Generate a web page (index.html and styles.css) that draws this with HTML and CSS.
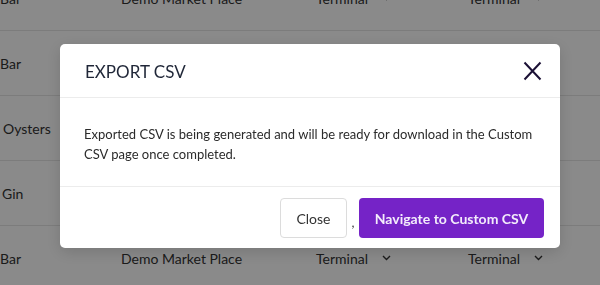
FILE: index.html
```html
<!DOCTYPE html>
<html>
<head>
    <title>Export CSV</title>
    <link rel="stylesheet" href="styles.css">
</head>
<body>
    <div class="tabla">
        <div class="fila">
            <div class="nombre">Bar</div>
            <div>Demo Market Place</div>
            <div class="select">Terminal <svg width="9" height="6" viewBox="0 0 9 6"><path d="M1 1l3.5 3.5L8 1" fill="none" stroke="#333" stroke-width="1.4"/></svg></div>
            <div class="select">Terminal <svg width="9" height="6" viewBox="0 0 9 6"><path d="M1 1l3.5 3.5L8 1" fill="none" stroke="#333" stroke-width="1.4"/></svg></div>
        </div>
        <div class="fila">
            <div class="nombre">Bar</div>
            <div>Demo Market Place</div>
            <div class="select">Terminal</div>
            <div class="select">Terminal</div>
        </div>
        <div class="fila">
            <div class="nombre corrido">Oysters</div>
            <div>Demo Market Place</div>
            <div class="select">Terminal</div>
            <div class="select">Terminal</div>
        </div>
        <div class="fila">
            <div class="nombre corrido-2">Gin</div>
            <div>Demo Market Place</div>
            <div class="select">Terminal</div>
            <div class="select">Terminal</div>
        </div>
        <div class="fila">
            <div class="nombre">Bar</div>
            <div>Demo Market Place</div>
            <div class="select">Terminal <svg width="9" height="6" viewBox="0 0 9 6"><path d="M1 1l3.5 3.5L8 1" fill="none" stroke="#333" stroke-width="1.4"/></svg></div>
            <div class="select">Terminal <svg width="9" height="6" viewBox="0 0 9 6"><path d="M1 1l3.5 3.5L8 1" fill="none" stroke="#333" stroke-width="1.4"/></svg></div>
        </div>
    </div>

    <!-- Fondo oscuro y ventana modal -->
    <div class="overlay">
        <div class="modal">
            <div class="modal-header">
                <h3>EXPORT CSV</h3>
                <button class="cerrar" aria-label="Cerrar">
                    <svg width="19" height="20" viewBox="0 0 19 20"><path d="M1.5 1.5l16 17M17.5 1.5l-16 17" stroke="#1b1035" stroke-width="2" fill="none"/></svg>
                </button>
            </div>
            <div class="modal-body">
                Exported CSV is being generated and will be ready for download in the Custom CSV page once completed.
            </div>
            <div class="modal-footer">
                <button class="btn btn-close">Close</button>
                <span class="coma">,</span>
                <button class="btn btn-primary">Navigate to Custom CSV</button>
            </div>
        </div>
    </div>
</body>
</html>
```

FILE: styles.css
```css
/* Estilos generales */
body {
    margin: 0;
    background-color: #fff;
    font-family: Lato, "Open Sans", sans-serif;
    color: #333;
    overflow: hidden;
}

/* Tabla de fondo */
.tabla {
    margin-top: -34px;
}

.fila {
    display: grid;
    grid-template-columns: 121px 195px 152px 1fr;
    align-items: center;
    height: 64px;
    border-bottom: 1px solid #e6e6e6;
    font-size: 14px;
}

.select {
    display: flex;
    align-items: center;
    gap: 14px;
}

.corrido {
    padding-left: 3px;
}

.corrido-2 {
    padding-left: 2px;
}

/* Fondo del modal */
.overlay {
    position: fixed;
    inset: 0;
    background-color: rgba(0, 0, 0, 0.46);
    display: flex;
    justify-content: center;
    align-items: flex-start;
    padding: 44px 0 0 20px;
}

.modal {
    width: 500px;
    background-color: #fff;
    border-radius: 5px;
    box-shadow: 0 4px 16px rgba(0, 0, 0, 0.15);
}

.modal-header {
    display: flex;
    justify-content: space-between;
    align-items: center;
    height: 53px;
    padding: 0 18px 0 25px;
    border-bottom: 1px solid #ececec;
}

.modal-header h3 {
    margin: 0;
    font-size: 17px;
    font-weight: normal;
    color: #1f2637;
    padding-top: 2px;
}

.cerrar {
    background: none;
    border: none;
    padding: 0;
    display: flex;
}

.modal-body {
    height: 89px;
    box-sizing: border-box;
    padding: 26px 26px 0 24px;
    font-size: 13px;
    line-height: 20px;
    color: #2b2b2b;
    border-bottom: 1px solid #ececec;
}

.modal-footer {
    display: flex;
    justify-content: flex-end;
    align-items: center;
    height: 60px;
    padding: 1px 16px 0 0;
}

.btn {
    height: 40px;
    border-radius: 4px;
    font-family: Lato, "Open Sans", sans-serif;
    font-size: 14px;
    cursor: pointer;
}

.btn-close {
    width: 67px;
    background-color: #fff;
    border: 1px solid #dcdcdc;
    color: #333;
}

.coma {
    width: 12px;
    text-align: center;
    font-size: 13px;
    padding-top: 8px;
}

.btn-primary {
    width: 185px;
    background-color: #7523c7;
    border: none;
    color: #f3ecfb;
    font-weight: bold;
}
```
